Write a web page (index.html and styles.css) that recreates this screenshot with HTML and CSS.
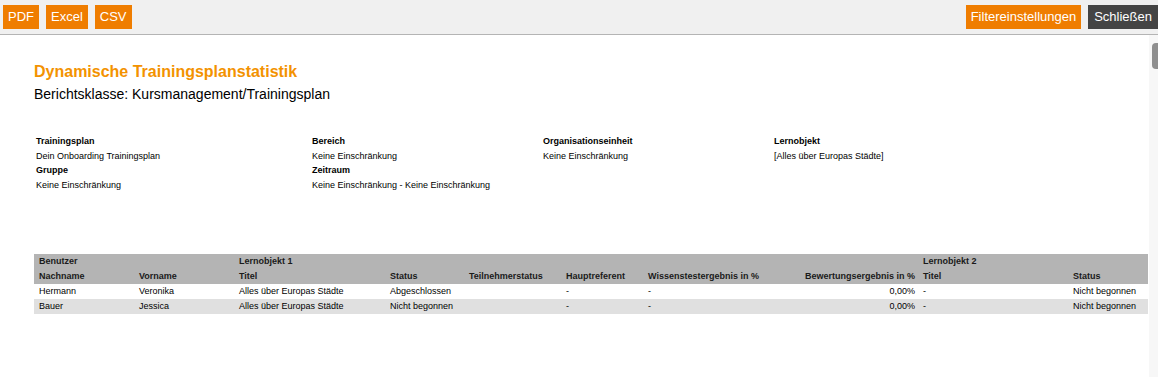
FILE: index.html
```html
<!DOCTYPE html>
<html lang="de">
<head>
    <meta charset="UTF-8">
    <title>Dynamische Trainingsplanstatistik</title>
    <link rel="stylesheet" href="styles.css">
</head>
<body>
    <div class="toolbar">
        <div class="btn-group">
            <button class="btn">PDF</button>
            <button class="btn">Excel</button>
            <button class="btn">CSV</button>
        </div>
        <div class="btn-group">
            <button class="btn">Filtereinstellungen</button>
            <button class="btn btn-dark">Schließen</button>
        </div>
    </div>

    <div class="main">
        <div class="report">
            <h1>Dynamische Trainingsplanstatistik</h1>
            <p class="subtitle">Berichtsklasse: Kursmanagement/Trainingsplan</p>

            <table class="filters">
                <colgroup>
                    <col style="width: 276px">
                    <col style="width: 231px">
                    <col style="width: 231px">
                    <col>
                </colgroup>
                <tr>
                    <th>Trainingsplan</th>
                    <th>Bereich</th>
                    <th>Organisationseinheit</th>
                    <th>Lernobjekt</th>
                </tr>
                <tr>
                    <td>Dein Onboarding Trainingsplan</td>
                    <td>Keine Einschränkung</td>
                    <td>Keine Einschränkung</td>
                    <td>[Alles über Europas Städte]</td>
                </tr>
                <tr>
                    <th>Gruppe</th>
                    <th>Zeitraum</th>
                    <th></th>
                    <th></th>
                </tr>
                <tr>
                    <td>Keine Einschränkung</td>
                    <td>Keine Einschränkung - Keine Einschränkung</td>
                    <td></td>
                    <td></td>
                </tr>
            </table>

            <table class="data">
                <colgroup>
                    <col style="width: 100px">
                    <col style="width: 100px">
                    <col style="width: 151px">
                    <col style="width: 79px">
                    <col style="width: 97px">
                    <col style="width: 82px">
                    <col style="width: 140px">
                    <col style="width: 135px">
                    <col style="width: 150px">
                    <col style="width: 80px">
                </colgroup>
                <thead>
                    <tr>
                        <th colspan="2">Benutzer</th>
                        <th colspan="6">Lernobjekt 1</th>
                        <th colspan="2">Lernobjekt 2</th>
                    </tr>
                    <tr>
                        <th>Nachname</th>
                        <th>Vorname</th>
                        <th>Titel</th>
                        <th>Status</th>
                        <th>Teilnehmerstatus</th>
                        <th>Hauptreferent</th>
                        <th>Wissenstestergebnis in %</th>
                        <th class="num">Bewertungsergebnis in %</th>
                        <th>Titel</th>
                        <th>Status</th>
                    </tr>
                </thead>
                <tbody>
                    <tr>
                        <td>Hermann</td>
                        <td>Veronika</td>
                        <td>Alles über Europas Städte</td>
                        <td>Abgeschlossen</td>
                        <td></td>
                        <td>-</td>
                        <td>-</td>
                        <td class="num">0,00%</td>
                        <td>-</td>
                        <td>Nicht begonnen</td>
                    </tr>
                    <tr>
                        <td>Bauer</td>
                        <td>Jessica</td>
                        <td>Alles über Europas Städte</td>
                        <td>Nicht begonnen</td>
                        <td></td>
                        <td>-</td>
                        <td>-</td>
                        <td class="num">0,00%</td>
                        <td>-</td>
                        <td>Nicht begonnen</td>
                    </tr>
                </tbody>
            </table>
        </div>
        <div class="scrollbar">
            <div class="scroll-thumb"></div>
        </div>
    </div>
</body>
</html>
```

FILE: styles.css
```css
html, body {
    height: 100%;
}
body {
    margin: 0;
    font-family: 'Liberation Sans', Arial, sans-serif;
    color: #000;
    background-color: white;
    display: flex;
    flex-direction: column;
}
.toolbar {
    display: flex;
    justify-content: space-between;
    padding: 5px 0 5px 3px;
    background-color: #f0f0f0;
    border-bottom: 1px solid #b4b4b4;
}
.btn-group {
    display: flex;
    gap: 7px;
}
.btn {
    height: 24px;
    padding: 0 5px;
    border: none;
    background-color: #ef7d00;
    color: white;
    font-family: 'Liberation Sans', Arial, sans-serif;
    font-size: 13px;
    line-height: 24px;
    cursor: pointer;
}
.btn-dark {
    background-color: #444;
    padding: 0 6px;
}
.main {
    flex: 1;
    display: flex;
}
.report {
    flex: 1;
    padding: 28px 1px 0 34px;
}
h1 {
    margin: 0;
    font-size: 16px;
    line-height: 18px;
    color: #f39200;
}
.subtitle {
    margin: 5px 0 0;
    font-size: 14px;
    line-height: 16px;
}
.filters {
    border-collapse: collapse;
    margin-top: 32px;
    margin-left: 2px;
    font-size: 9px;
}
.filters th, .filters td {
    padding: 0;
    height: 14.6px;
    line-height: 14.6px;
    text-align: left;
    vertical-align: middle;
    white-space: nowrap;
}
.filters th {
    font-weight: bold;
}
.data {
    border-collapse: collapse;
    table-layout: fixed;
    width: 1114px;
    margin-top: 62px;
    font-size: 9px;
}
.data th, .data td {
    height: 15px;
    padding: 0 0 0 5px;
    line-height: 15px;
    text-align: left;
    white-space: nowrap;
    overflow: hidden;
}
.data thead th {
    background-color: #b4b4b4;
    color: #1a1a1a;
    font-weight: bold;
}
.data tbody tr:nth-child(even) td {
    background-color: #e0e0e0;
}
.data .num {
    text-align: right;
    padding-right: 3px;
}
.scrollbar {
    width: 9px;
    background-color: #f7f7f7;
}
.scroll-thumb {
    width: 6px;
    height: 26px;
    margin: 8px 0 0 3px;
    border-radius: 4px 0 0 4px;
    background-color: #8f8f8f;
}
```
